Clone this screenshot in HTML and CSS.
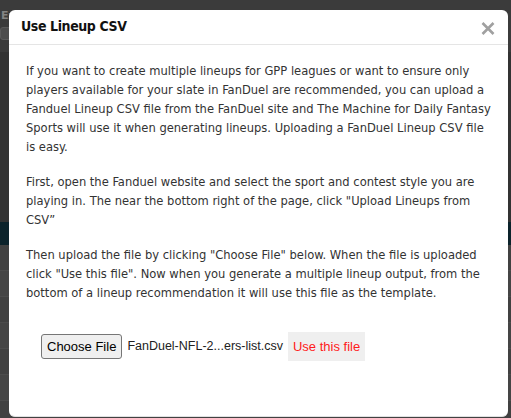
FILE: index.html
```html
<!DOCTYPE html>
<html>
<head>
<meta charset="utf-8">
<link rel="stylesheet" href="styles.css">
</head>
<body>
<div class="page">
  <div class="page-top">
    <span class="page-label">Ex</span>
    <div class="page-input"></div>
  </div>
  <div class="page-gap"></div>
  <div class="page-band"></div>
  <div class="page-row"></div>
  <div class="page-row alt"></div>
  <div class="page-row"></div>
  <div class="page-row alt"></div>
  <div class="page-row"></div>
  <div class="page-row alt"></div>
  <div class="page-row"></div>
</div>
<div class="overlay">
  <div class="modal">
    <div class="modal-header">
      <h4 class="modal-title">Use Lineup CSV</h4>
      <button class="close" aria-label="Close">
        <svg width="14" height="13" viewBox="0 0 14 13"><path d="M1.5 1 L12.5 12 M12.5 1 L1.5 12" stroke="#a0a0a0" stroke-width="2.6" stroke-linecap="butt"/></svg>
      </button>
    </div>
    <div class="modal-body">
      <p>If you want to create multiple lineups for GPP leagues or want to ensure only players available for your slate in FanDuel are recommended, you can upload a Fanduel Lineup CSV file from the FanDuel site and The Machine for Daily Fantasy Sports will use it when generating lineups. Uploading a FanDuel Lineup CSV file is easy.</p>
      <p>First, open the Fanduel website and select the sport and contest style you are playing in. The near the bottom right of the page, click "Upload Lineups from CSV”</p>
      <p>Then upload the file by clicking "Choose File" below. When the file is uploaded click "Use this file". Now when you generate a multiple lineup output, from the bottom of a lineup recommendation it will use this file as the template.</p>
      <div class="upload-row">
        <button class="choose-btn">Choose File</button>
        <span class="file-name">FanDuel-NFL-2...ers-list.csv</span>
        <button class="use-btn">Use this file</button>
      </div>
    </div>
  </div>
</div>
</body>
</html>
```

FILE: styles.css
```css
html, body {
  margin: 0;
  padding: 0;
  height: 100%;
  overflow: hidden;
}
body {
  background: #454545;
  font-family: "DejaVu Sans Condensed", "DejaVu Sans", sans-serif;
}
.page {
  display: flex;
  flex-direction: column;
}
.page-top {
  height: 52px;
  display: flex;
  flex-direction: column;
  padding: 9px 0 0 0;
  box-sizing: border-box;
  background: #464646;
}
.page-label {
  font: bold 11px "DejaVu Sans", sans-serif;
  color: #9a9a9a;
  padding-left: 1px;
  height: 18px;
}
.page-input {
  width: 40px;
  height: 11px;
  background: #5a5a5a;
  border: 1px solid #6a6a6a;
  border-radius: 3px;
}
.page-gap {
  height: 170px;
  background: #3c3c3c;
}
.page-band {
  height: 23px;
  background: #0f2a33;
}
.page-row {
  height: 25px;
  background: #4d4d4d;
  border-bottom: 1px solid #5a5a5a;
}
.page-row.alt {
  background: #525252;
}
.overlay {
  position: fixed;
  inset: 0;
  background: rgba(0, 0, 0, 0.15);
  padding: 10px 3px 0 9px;
}
.modal {
  background: #fff;
  border-radius: 6px;
  height: 407px;
  box-sizing: border-box;
  border-bottom: 1px solid #e0e0e0;
}
.modal-header {
  display: flex;
  align-items: center;
  justify-content: space-between;
  height: 35px;
  box-sizing: border-box;
  border-bottom: 1px solid #e5e5e5;
  padding: 0 13px 0 12px;
}
.modal-title {
  margin: 0;
  font: bold 14px "DejaVu Sans Condensed", "DejaVu Sans", sans-serif;
  letter-spacing: -0.4px;
  color: #111;
  margin-top: -3px;
}
.close {
  border: 0;
  background: none;
  padding: 0;
  display: flex;
  margin-top: 3px;
}
.modal-body {
  padding: 16px 17px 0 17px;
  font-size: 12.8px;
  line-height: 19px;
  color: #333;
}
.modal-body p {
  margin: 0 0 16px 0;
}
.upload-row {
  display: flex;
  align-items: center;
  padding: 14px 15px 0 15px;
  font-family: "Liberation Sans", Arial, sans-serif;
}
.choose-btn {
  font: 13px "Liberation Sans", Arial, sans-serif;
  height: 25px;
  padding: 0 5px;
  background: #efefef;
  border: 1px solid #767676;
  border-radius: 3px;
  color: #000;
}
.file-name {
  font-size: 12.5px;
  color: #222;
  margin-left: 5px;
}
.use-btn {
  font: 13px "Liberation Sans", Arial, sans-serif;
  color: #ff1a1a;
  background: #efefef;
  border: 0;
  height: 29px;
  padding: 0 5px;
  margin-left: 5px;
}
```
